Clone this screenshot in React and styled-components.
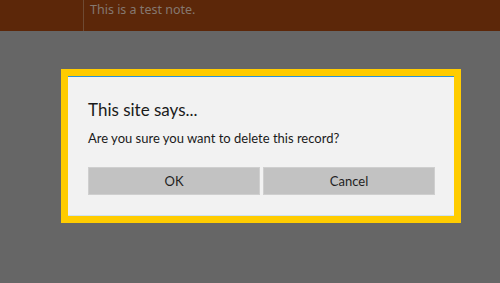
import React from "react";
import styled, { createGlobalStyle } from "styled-components";

const Global = createGlobalStyle`
  html, body { margin: 0; padding: 0; background: #666666; }
  body { font-family: Lato, "Noto Sans", sans-serif; }
`;

const Page = styled.div`
  width: 500px;
  height: 283px;
  display: flex;
  flex-direction: column;
  background: #666666;
  overflow: hidden;
`;

const TopBar = styled.div`
  height: 31px;
  flex: none;
  display: flex;
  background: #5c2709;
`;

const BarCell = styled.div`
  width: ${(p) => p.$w || "auto"};
  flex: ${(p) => (p.$w ? "none" : "1")};
  border-right: ${(p) => (p.$divider ? "1px solid #6e4a33" : "none")};
  padding: 2px 6px;
  font-family: "Noto Sans", sans-serif;
  font-size: 12.5px;
  line-height: 16px;
  color: #857870;
  box-sizing: border-box;
`;

const Backdrop = styled.div`
  flex: 1;
  padding: 38px 0 0 61px;
`;

const Frame = styled.div`
  width: 400px;
  height: 154px;
  box-sizing: border-box;
  border: 7px solid #ffcc00;
  background: #ffcc00;
`;

const Dialog = styled.div`
  height: 100%;
  box-sizing: border-box;
  background: #f2f2f2;
  border-top: 1px solid #2b93d6;
  border-bottom: 1px solid #cfe3ef;
  padding: 22px 19px 0 20px;
  display: flex;
  flex-direction: column;
`;

const Title = styled.div`
  font-family: Lato, sans-serif;
  font-size: 17px;
  color: #1a1a1a;
  line-height: 22px;
`;

const Message = styled.div`
  margin-top: 8px;
  font-family: Lato, sans-serif;
  font-size: 13px;
  color: #1a1a1a;
  line-height: 18px;
`;

const Buttons = styled.div`
  margin-top: 20px;
  display: flex;
  gap: 3px;
`;

const Button = styled.button`
  flex: 1;
  height: 28px;
  background: #c2c2c2;
  border: 1px solid #cfcfcf;
  font-family: Lato, sans-serif;
  font-size: 13px;
  color: #1f1f1f;
  padding: 0;
`;

export default function App() {
  return (
    <Page>
      <Global />
      <TopBar>
        <BarCell $w="84px" $divider />
        <BarCell>This is a test note.</BarCell>
      </TopBar>
      <Backdrop>
        <Frame>
          <Dialog>
            <Title>This site says...</Title>
            <Message>Are you sure you want to delete this record?</Message>
            <Buttons>
              <Button>OK</Button>
              <Button>Cancel</Button>
            </Buttons>
          </Dialog>
        </Frame>
      </Backdrop>
    </Page>
  );
}
